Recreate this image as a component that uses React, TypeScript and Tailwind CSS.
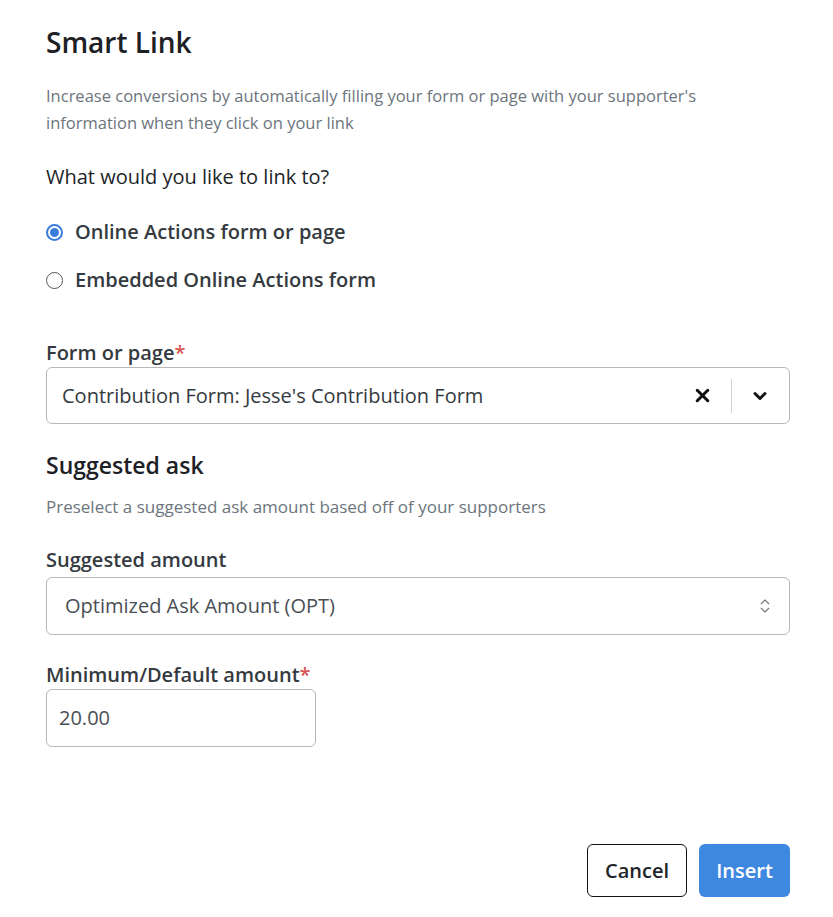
import { X, ChevronDown, ChevronsUpDown } from "lucide-react";

export default function App() {
  return (
    <div
      className="min-h-screen w-[833px] bg-white text-[#212529]"
      style={{ fontFamily: '"Open Sans", "Noto Sans", sans-serif' }}
    >
      <div className="flex flex-col pl-[46px] pr-[43px] pt-[24px]">
        <h1 className="text-[28px] font-semibold leading-[36px] text-[#1d2125]">Smart Link</h1>

        <p className="mt-[22px] text-[16.5px] leading-[27px] text-[#6c757d]">
          Increase conversions by automatically filling your form or page with your supporter's
          information when they click on your link
        </p>

        <p className="mt-[27px] text-[20px] leading-[28px] text-[#212529]">What would you like to link to?</p>

        <div className="mt-[27px] flex flex-col gap-[20px]">
          <label className="flex items-center gap-[12px]">
            <span className="flex h-[17px] w-[17px] items-center justify-center rounded-full border-2 border-[#3b7ddd]">
              <span className="h-[9px] w-[9px] rounded-full bg-[#3b7ddd]" />
            </span>
            <span className="text-[20px] font-semibold leading-[28px] text-[#343a40]">Online Actions form or page</span>
          </label>
          <label className="flex items-center gap-[12px]">
            <span className="h-[17px] w-[17px] rounded-full border border-[#555]" />
            <span className="text-[20px] font-semibold leading-[28px] text-[#343a40]">Embedded Online Actions form</span>
          </label>
        </div>

        <div className="mt-[45px] text-[20px] font-semibold leading-[28px] text-[#343a40]">
          Form or page<span className="text-[#d9534f]">*</span>
        </div>
        <div className="flex h-[57px] items-center rounded-[6px] border border-[#b8b8b8] pl-[15px]">
          <span className="flex-1 text-[20px] text-[#343a40]">Contribution Form: Jesse's Contribution Form</span>
          <X className="mr-[18px] h-[21px] w-[21px] text-[#111]" strokeWidth={3.5} />
          <span className="h-[34px] w-px bg-[#d0d0d0]" />
          <ChevronDown className="ml-[18px] mr-[19px] h-[20px] w-[20px] text-[#111]" strokeWidth={3.5} />
        </div>

        <h2 className="mt-[25px] text-[23px] font-semibold leading-[32px] text-[#1d2125]">Suggested ask</h2>
        <p className="mt-[13px] text-[17px] leading-[26px] text-[#6c757d]">
          Preselect a suggested ask amount based off of your supporters
        </p>

        <div className="mt-[26px] text-[20px] font-semibold leading-[28px] text-[#343a40]">Suggested amount</div>
        <div className="mt-[3px] flex h-[58px] items-center rounded-[6px] border border-[#b8b8b8] pl-[18px] pr-[15px]">
          <span className="flex-1 text-[20px] text-[#4a4f55]">Optimized Ask Amount (OPT)</span>
          <ChevronsUpDown className="h-[18px] w-[18px] text-[#777]" strokeWidth={1.5} />
        </div>

        <div className="mt-[26px] text-[20px] font-semibold leading-[28px] text-[#343a40]">
          Minimum/Default amount<span className="text-[#d9534f]">*</span>
        </div>
        <div className="flex h-[58px] w-[270px] items-center rounded-[6px] border border-[#b8b8b8] pl-[12px]">
          <span className="text-[20px] text-[#4a4f55]">20.00</span>
        </div>

        <div className="mt-[97px] flex justify-end gap-[12px]">
          <button className="h-[53px] w-[100px] rounded-[6px] border border-[#111] bg-white text-[20px] font-semibold text-[#212529]">
            Cancel
          </button>
          <button className="h-[53px] w-[91px] rounded-[6px] bg-[#3f88e0] text-[20px] font-semibold text-white">
            Insert
          </button>
        </div>
      </div>
    </div>
  );
}
